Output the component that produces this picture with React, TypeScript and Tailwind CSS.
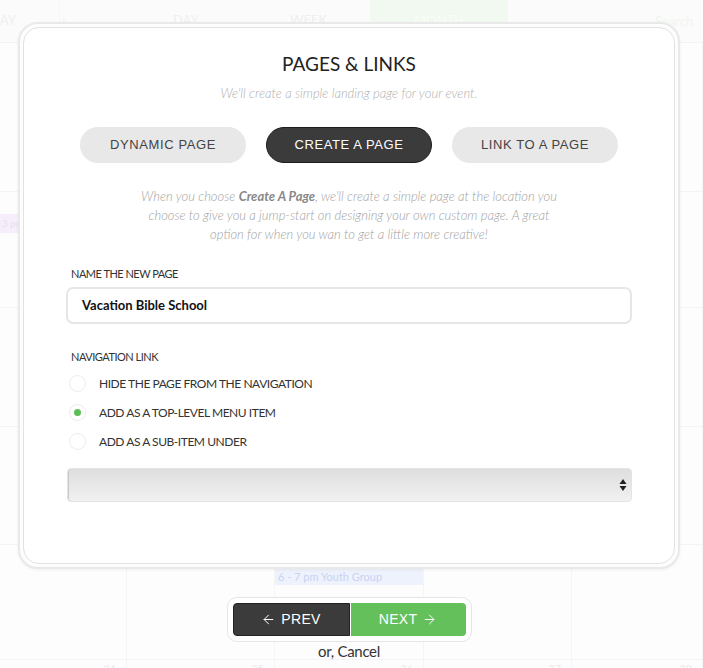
import { ArrowLeft, ArrowRight } from "lucide-react";

const tabs = [
  { label: "DYNAMIC PAGE", active: false },
  { label: "CREATE A PAGE", active: true },
  { label: "LINK TO A PAGE", active: false },
];

const navOptions = [
  { label: "HIDE THE PAGE FROM THE NAVIGATION", checked: false },
  { label: "ADD AS A TOP-LEVEL MENU ITEM", checked: true },
  { label: "ADD AS A SUB-ITEM UNDER", checked: false },
];

const rowHeights = [149, 116, 119, 118, 115, 30];

function CalendarBackdrop() {
  return (
    <div className="flex flex-col w-full h-full bg-[#fdfdfd]">
      <div className="flex shrink-0 h-[43px] border-b border-[#f3f3f3] bg-[#fbfbfb] text-[13px] text-[#efefef]">
        <div className="w-[60px] pt-[11px] border-r border-[#f6f6f6]">AY</div>
        <div className="w-[20px] pt-[11px] pl-[2px]">›</div>
        <div className="w-[93px]" />
        <div className="w-[40px] pt-[11px]">DAY</div>
        <div className="w-[77px]" />
        <div className="w-[80px] pt-[11px]">WEEK</div>
        <div className="w-[138px] h-[27px] pt-[11px] text-center bg-[#f1f9f0] text-[#f9fdf8] rounded-b-sm">MONTH</div>
        <div className="w-[147px]" />
        <div className="flex-1 pt-[12px] text-[13px] text-[#f0f5ef]">Search</div>
      </div>
      {rowHeights.map((h, r) => (
        <div
          key={r}
          className="grid shrink-0 grid-cols-[127px_148px_149px_148px_1fr] border-b border-[#f4f4f4]"
          style={{ height: h }}
        >
          {[0, 1, 2, 3, 4].map((c) => (
            <div key={c} className="border-r border-[#f5f5f5] text-[11px] text-[#eaeaea]">
              {r === 1 && c === 0 && (
                <div className="mt-[22px] h-[19px] bg-[#f6effb] text-[#e9dcf3] text-[10px] pl-[2px] leading-[19px]">
                  3 pm
                </div>
              )}
              {r === 4 && c === 2 && (
                <div className="mt-[23px] h-[17px] bg-[#eef2fd] text-[#c9d3f2] text-[11px] pl-[3px] leading-[17px]">
                  6 - 7 pm Youth Group
                </div>
              )}
              {r === 5 && <div className="text-right pr-[10px] pt-[1px]">{24 + c}</div>}
            </div>
          ))}
        </div>
      ))}
    </div>
  );
}

export default function App() {
  return (
    <div className="relative w-[703px] h-[668px] overflow-hidden font-['Lato','Noto_Sans',sans-serif]">
      <CalendarBackdrop />

      <div className="absolute inset-0 flex flex-col items-center pt-[22px] pr-[5px]">
        <div className="w-[662px] h-[547px] rounded-[20px] border-2 border-[#e9e9e9] bg-[#fdfdfd] p-[3px] shadow-[0_1px_3px_rgba(0,0,0,0.06)]">
          <div className="h-full rounded-[16px] border border-[#e2e2e2] bg-white flex flex-col items-center">
            <h1 className="mt-[24px] text-[19px] leading-[24px] text-[#222]">PAGES &amp; LINKS</h1>
            <p className="mt-[8px] text-[13px] italic font-light text-[#b0b0b0]">
              We'll create a simple landing page for your event.
            </p>

            <div className="mt-[23px] flex gap-[20px] font-['Liberation_Sans',Arial,sans-serif]">
              {tabs.map((t) => (
                <div
                  key={t.label}
                  className={`w-[166px] h-[36px] rounded-full flex items-center justify-center text-[13px] tracking-[0.6px] ${
                    t.active
                      ? "bg-[#3b3b3b] border border-[#1c1c1c] text-white"
                      : "bg-[#e8e8e8] text-[#444]"
                  }`}
                >
                  {t.label}
                </div>
              ))}
            </div>

            <p className="mt-[24px] w-[430px] text-center text-[13px] leading-[19px] italic font-light text-[#a2a2a2]">
              When you choose <span className="font-bold text-[#888]">Create A Page</span>, we'll create a simple page
              at the location you choose to give you a jump-start on designing your own custom page. A great option for
              when you wan to get a little more creative!
            </p>

            <div className="self-stretch px-[42px] mt-[22px]">
              <div className="pl-[5px] text-[11px] tracking-[-0.5px] text-[#333]">NAME THE NEW PAGE</div>
              <div className="mt-[5px] h-[37px] rounded-[7px] border-2 border-[#e6e6e6] flex items-center pl-[14px] text-[13px] font-bold text-[#111]">
                Vacation Bible School
              </div>

              <div className="mt-[25px] pl-[5px] text-[11px] tracking-[-0.5px] text-[#333]">NAVIGATION LINK</div>
              <div className="mt-[10px] flex flex-col gap-[13px] pl-[3px]">
                {navOptions.map((o) => (
                  <div key={o.label} className="flex items-center gap-[13px] h-[16px]">
                    <div className="w-[17px] h-[17px] rounded-full border border-[#ececec] bg-white flex items-center justify-center">
                      {o.checked && <div className="w-[7px] h-[7px] rounded-full bg-[#5bbf55]" />}
                    </div>
                    <span className="text-[12px] tracking-[-0.45px] text-[#333]">{o.label}</span>
                  </div>
                ))}
              </div>

              <div className="mt-[18px] ml-[1px] h-[34px] rounded-[4px] border border-[#e4e4e4] shadow-[inset_1px_0_0_#c8c8c8] bg-gradient-to-b from-[#dedede] to-[#f1f1f1] flex items-center justify-end pr-[4px]">
                <svg width="8" height="14" viewBox="0 0 8 14">
                  <path d="M4 1 L7.5 6 H0.5 Z" fill="#222" />
                  <path d="M4 13 L7.5 8 H0.5 Z" fill="#222" />
                </svg>
              </div>
            </div>
          </div>
        </div>

        <div className="mt-[28px] rounded-[10px] border border-[#e6e6e6] bg-white p-[5px] flex font-['Liberation_Sans',Arial,sans-serif]">
          <div className="w-[117px] h-[33px] rounded-l-[4px] bg-[#3b3b3b] border border-[#222] flex items-center justify-center gap-[5px] text-white text-[14px] tracking-[0.3px]">
            <ArrowLeft className="w-[15px] h-[15px]" strokeWidth={1.6} />
            PREV
          </div>
          <div className="ml-[1px] w-[115px] h-[33px] rounded-r-[4px] bg-[#64c05b] flex items-center justify-center gap-[5px] text-white text-[14px] tracking-[0.3px]">
            NEXT
            <ArrowRight className="w-[15px] h-[15px]" strokeWidth={1.6} />
          </div>
        </div>
        <div className="mt-[-2px] text-[15px] tracking-[-0.3px] text-[#333]">or, Cancel</div>
      </div>
    </div>
  );
}
